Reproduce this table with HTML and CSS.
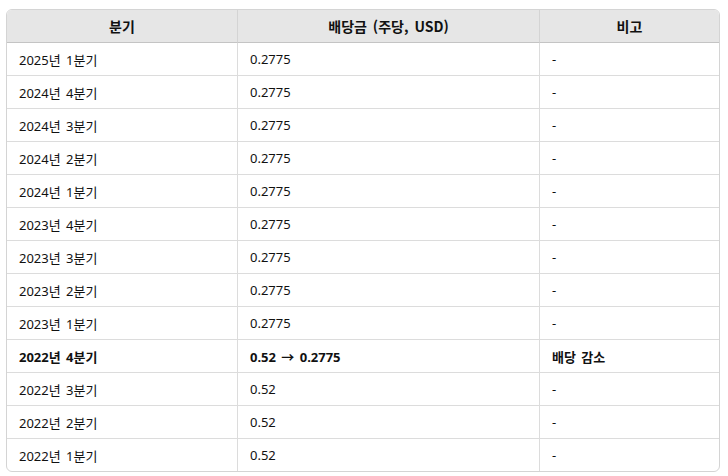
FILE: index.html
```html
<!DOCTYPE html>
<html lang="ko">
<head>
<meta charset="utf-8">
<link rel="stylesheet" href="styles.css">
</head>
<body>
<div class="wrap">
<table class="divs">
<colgroup><col class="c1"><col class="c2"><col class="c3"></colgroup>
<thead>
<tr><th>분기</th><th>배당금 (주당, USD)</th><th>비고</th></tr>
</thead>
<tbody>
<tr><td>2025년 1분기</td><td>0.2775</td><td>-</td></tr>
<tr><td>2024년 4분기</td><td>0.2775</td><td>-</td></tr>
<tr><td>2024년 3분기</td><td>0.2775</td><td>-</td></tr>
<tr><td>2024년 2분기</td><td>0.2775</td><td>-</td></tr>
<tr><td>2024년 1분기</td><td>0.2775</td><td>-</td></tr>
<tr><td>2023년 4분기</td><td>0.2775</td><td>-</td></tr>
<tr><td>2023년 3분기</td><td>0.2775</td><td>-</td></tr>
<tr><td>2023년 2분기</td><td>0.2775</td><td>-</td></tr>
<tr><td>2023년 1분기</td><td>0.2775</td><td>-</td></tr>
<tr class="strong"><td>2022년 4분기</td><td>0.52 → 0.2775</td><td>배당 감소</td></tr>
<tr><td>2022년 3분기</td><td>0.52</td><td>-</td></tr>
<tr><td>2022년 2분기</td><td>0.52</td><td>-</td></tr>
<tr><td>2022년 1분기</td><td>0.52</td><td>-</td></tr>
</tbody>
</table>
</div>
</body>
</html>
```
FILE: styles.css
```css
html, body { margin: 0; padding: 0; background: #fff; }
body {
  font-family: "Noto Sans", "Noto Sans CJK KR", sans-serif;
  font-size: 13px;
  color: #111;
}
.wrap { padding: 9px 0 0 6px; }
.divs {
  width: 712px;
  table-layout: fixed;
  border-collapse: separate;
  border-spacing: 0;
  border: 1px solid #d4d4d4;
  border-radius: 6px;
  overflow: hidden;
}
.c1 { width: 231px; }
.c2 { width: 302px; }
.c3 { width: 179px; }
th {
  background: #e6e6e6;
  font-family: "Noto Sans CJK KR", sans-serif;
  font-size: 14px;
  font-weight: 700;
  word-spacing: 2px;
  height: 32px;
  padding: 0;
  text-align: center;
  border-bottom: 1px solid #c4c4c4;
  border-right: 1px solid #d4d4d4;
}
td {
  height: 32px;
  padding: 0 12px;
  word-spacing: 2px;
  border-bottom: 1px solid #dcdcdc;
  border-right: 1px solid #dcdcdc;
  text-align: left;
}
th:last-child, td:last-child { border-right: none; }
tbody tr:last-child td { border-bottom: none; }
.strong td { font-weight: 700; }
```
